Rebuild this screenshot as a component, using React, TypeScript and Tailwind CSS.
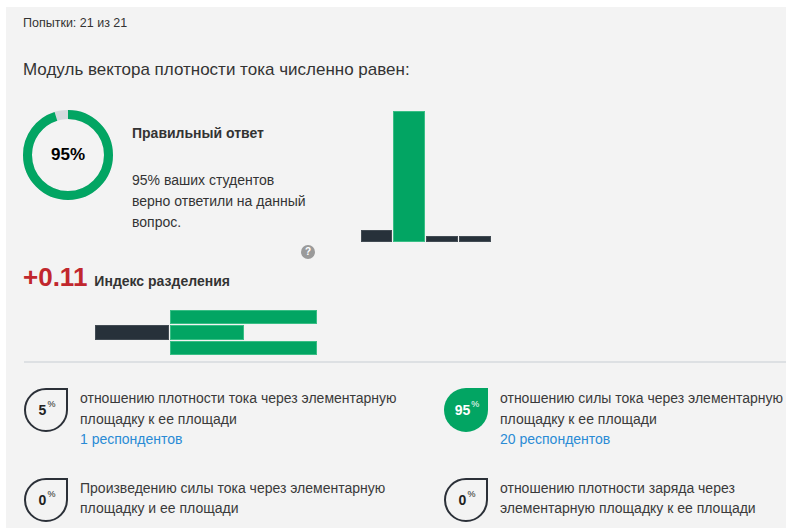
import { ReactNode } from "react";

const GREEN = "#02a563";

function Donut({ value }: { value: number }) {
  const r = 40.5;
  const c = 2 * Math.PI * r;
  const on = (c * value) / 100;
  return (
    <div className="relative w-[90px] h-[90px] shrink-0">
      <svg width="90" height="90" viewBox="0 0 90 90" className="-rotate-90">
        <circle cx="45" cy="45" r={r} fill="none" stroke="#d5dade" strokeWidth="9" />
        <circle
          cx="45"
          cy="45"
          r={r}
          fill="none"
          stroke={GREEN}
          strokeWidth="9"
          strokeDasharray={`${on} ${c}`}
        />
      </svg>
      <div className="absolute inset-0 flex items-center justify-center text-[17px] font-bold text-black">
        {value}%
      </div>
    </div>
  );
}

function Drop({ value, filled }: { value: number; filled?: boolean }) {
  return (
    <div
      className={
        filled
          ? "w-11 h-11 shrink-0 rounded-full rounded-tr-none bg-[#02a563] text-white flex items-center justify-center"
          : "w-11 h-11 shrink-0 rounded-full rounded-tr-none border-2 border-[#2b3038] text-[#222] flex items-center justify-center"
      }
    >
      <div className="flex items-start ml-[2px]">
        <span className="text-[14px] font-bold leading-[14px]">{value}</span>
        <span className="text-[9px] leading-[9px] -mt-[3px] ml-px">%</span>
      </div>
    </div>
  );
}

function Answer({
  value,
  filled,
  children,
  count,
}: {
  value: number;
  filled?: boolean;
  children: ReactNode;
  count?: string;
}) {
  return (
    <div className="flex items-start">
      <Drop value={value} filled={filled} />
      <div className="ml-[12px] text-[14px] leading-[20.5px] text-[#3a3a3a]">
        <p>{children}</p>
        {count && <p className="text-[#2a8bd5]">{count}</p>}
      </div>
    </div>
  );
}

export default function App() {
  return (
    <div
      className="bg-white pt-[7px] pl-[6px] pr-px h-[528px] overflow-hidden"
      style={{ fontFamily: "'Liberation Sans', Arial, sans-serif" }}
    >
      <div className="bg-[#f3f3f3] h-full pl-[17px] pt-2">
        <p className="text-[12.5px] leading-4 text-[#333]">Попытки: 21 из 21</p>
        <h2 className="mt-[27px] text-[17px] leading-6 text-[#333]">
          Модуль вектора плотности тока численно равен:
        </h2>

        {/* donut + summary, distribution bars */}
        <div className="flex items-start mt-[28px]">
          <div className="w-[338px] shrink-0">
            <div className="flex items-start">
              <Donut value={95} />
              <div className="ml-[19px] pt-[15px] text-[14px] text-[#333]">
                <p className="font-bold leading-4">Правильный ответ</p>
                <p className="mt-[29px] leading-[21px]">
                  95% ваших студентов
                  <br />
                  верно ответили на данный
                  <br />
                  вопрос.
                </p>
              </div>
            </div>
            <div className="flex justify-end pr-[46px] mt-[12px]">
              <span className="w-[14px] h-[14px] rounded-full bg-[#9a9a9a] text-white text-[10px] font-bold leading-[14px] text-center">
                ?
              </span>
            </div>
          </div>
          <div className="flex items-end gap-px h-[131px] mt-px">
            <div className="w-[31px] h-[12px] bg-[#27313a] border border-[#6b737b]/40" />
            <div className="w-[32px] h-[131px] bg-[#02a563] border border-[#5fcf9c]/60" />
            <div className="w-[32px] h-[6px] bg-[#27313a] border border-[#6b737b]/40" />
            <div className="w-[32px] h-[6px] bg-[#27313a] border border-[#6b737b]/40" />
          </div>
        </div>

        {/* discrimination index */}
        <div className="flex items-baseline mt-[2px]">
          <span className="text-[26px] font-bold text-[#c1272d] leading-8">+0.11</span>
          <span className="ml-[7px] text-[14px] font-bold text-[#333]">Индекс разделения</span>
        </div>
        <div className="flex items-center ml-[72px] mt-[17px]">
          <div className="w-[74px] h-[15px] bg-[#27313a] border border-[#6b737b]/40" />
          <div className="flex flex-col gap-px ml-px">
            <div className="w-[147px] h-[14px] bg-[#02a563] border border-[#5fcf9c]/60" />
            <div className="w-[74px] h-[15px] bg-[#02a563] border border-[#5fcf9c]/60" />
            <div className="w-[147px] h-[14px] bg-[#02a563] border border-[#5fcf9c]/60" />
          </div>
        </div>
        <div className="mt-[6px] ml-px h-[2px] bg-[#dde0e3]" />

        {/* answer options */}
        <div className="grid grid-cols-[420px_1fr] gap-y-[28px] mt-[25px] pl-px">
          <Answer value={5} count="1 респондентов">
            отношению плотности тока через элементарную
            <br />
            площадку к ее площади
          </Answer>
          <Answer value={95} filled count="20 респондентов">
            отношению силы тока через элементарную
            <br />
            площадку к ее площади
          </Answer>
          <Answer value={0}>
            Произведению силы тока через элементарную
            <br />
            площадку и ее площади
          </Answer>
          <Answer value={0}>
            отношению плотности заряда через
            <br />
            элементарную площадку к ее площади
          </Answer>
        </div>
      </div>
    </div>
  );
}
